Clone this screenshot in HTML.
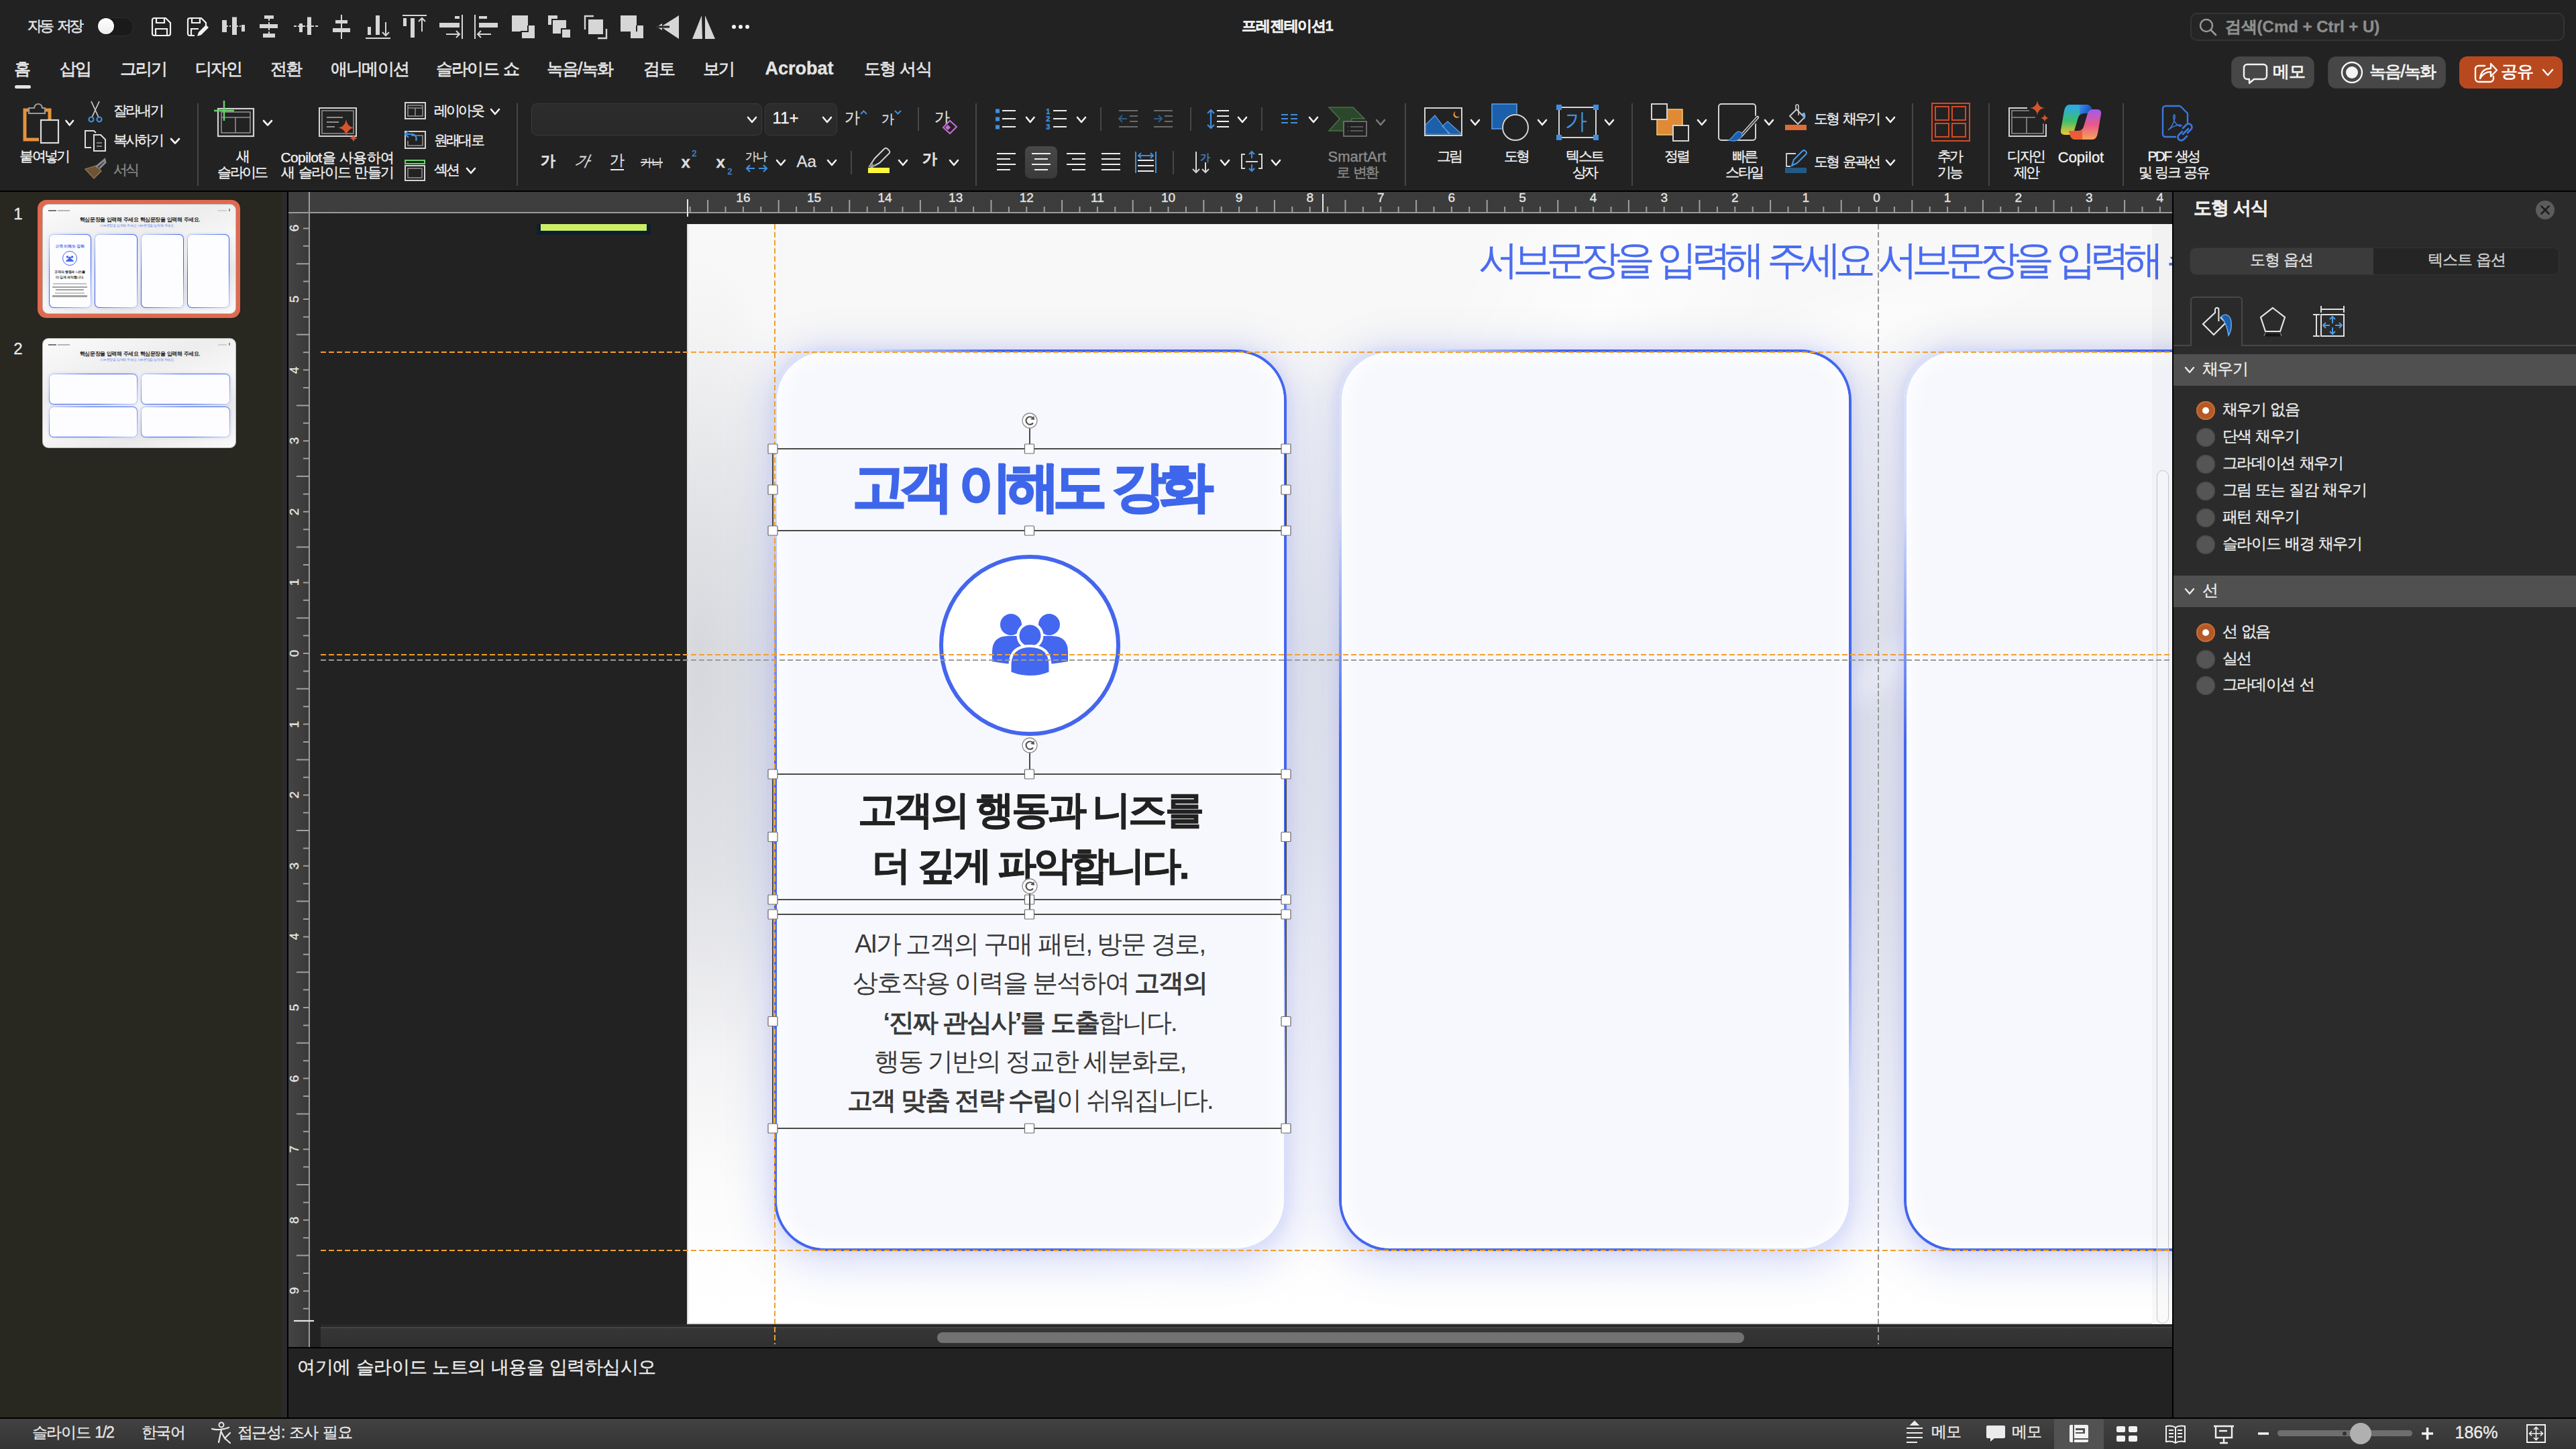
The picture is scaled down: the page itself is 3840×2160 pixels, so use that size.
<!DOCTYPE html>
<html><head><meta charset="utf-8">
<style>
*{margin:0;padding:0;box-sizing:border-box}
html,body{width:3840px;height:2160px;overflow:hidden;background:#222;font-family:"Liberation Sans",sans-serif;color:#eee}
.a{position:absolute}
.t{position:absolute;white-space:nowrap;line-height:1;-webkit-text-stroke:0.35px currentColor}
</style></head><body>
<div class="a" style="left:0px;top:0px;width:3840px;height:284px;background:#222"></div><div class="a" style="left:0px;top:284px;width:3840px;height:2px;background:#000"></div><div class="a" style="left:0px;top:286px;width:420px;height:1827px;background:#282720"></div><div class="a" style="left:420px;top:286px;width:8px;height:1827px;background:#2b2b2b"></div><div class="a" style="left:428px;top:286px;width:2px;height:1827px;background:#000"></div><div class="a" style="left:430px;top:286px;width:2808px;height:1692px;background:#222"></div><div class="a" style="left:3238px;top:286px;width:2px;height:1827px;background:#000"></div><div class="a" style="left:3240px;top:286px;width:600px;height:1827px;background:#2b2b2b"></div><div class="a" style="left:478px;top:1974px;width:2760px;height:4px;background:#292929"></div><div class="a" style="left:478px;top:1978px;width:2760px;height:30px;background:linear-gradient(#363636,#303030);border-top:2px solid #444;border-bottom:1.5px solid #3a3a3a"></div><div class="a" style="left:428px;top:2008px;width:2810px;height:2px;background:#000"></div><div class="a" style="left:430px;top:2010px;width:2808px;height:103px;background:#222"></div><div class="a" style="left:0px;top:2113px;width:3840px;height:2px;background:#000"></div><div class="a" style="left:0px;top:2115px;width:3840px;height:45px;background:linear-gradient(#424242,#343434)"></div><div class="t" style="left:40.7px;top:27.7px;font-size:22px;color:#e2e2e2;font-weight:400;letter-spacing:-3.4px;word-spacing:3.7px;word-spacing:4px;-webkit-text-stroke:0.6px #e2e2e2">자동 저장</div><div class="a" style="left:144px;top:26px;width:55px;height:28px;background:#1a1a1a;border-radius:14px;border:1px solid #2e2e2e"></div><div class="a" style="left:146px;top:27px;width:24px;height:24px;background:linear-gradient(#fff,#ececec);border-radius:12px;box-shadow:0 0 0 1px rgba(0,0,0,.35)"></div><div class="t" style="left:919px;width:2000px;text-align:center;top:27.7px;font-size:22px;color:#f0f0f0;font-weight:700;letter-spacing:-1.3px;word-spacing:1.4px;">프레젠테이션1</div><div class="a" style="left:3265px;top:19px;width:558px;height:42px;background:#252525;border:2px solid #343434;border-radius:10px"></div><div class="t" style="left:3316.6px;top:27.6px;font-size:24px;color:#8d8d8d;font-weight:700;letter-spacing:0px;">검색(Cmd + Ctrl + U)</div><div class="t" style="left:20.5px;top:90.0px;font-size:25px;color:#e4e4e4;font-weight:400;letter-spacing:-1.6px;word-spacing:1.8px;-webkit-text-stroke:0.7px #e4e4e4">홈</div><div class="t" style="left:88.5px;top:90.0px;font-size:25px;color:#e4e4e4;font-weight:400;letter-spacing:-1.6px;word-spacing:1.8px;-webkit-text-stroke:0.7px #e4e4e4">삽입</div><div class="t" style="left:178.5px;top:90.0px;font-size:25px;color:#e4e4e4;font-weight:400;letter-spacing:-1.6px;word-spacing:1.8px;-webkit-text-stroke:0.7px #e4e4e4">그리기</div><div class="t" style="left:290.5px;top:90.0px;font-size:25px;color:#e4e4e4;font-weight:400;letter-spacing:-1.6px;word-spacing:1.8px;-webkit-text-stroke:0.7px #e4e4e4">디자인</div><div class="t" style="left:402.5px;top:90.0px;font-size:25px;color:#e4e4e4;font-weight:400;letter-spacing:-1.6px;word-spacing:1.8px;-webkit-text-stroke:0.7px #e4e4e4">전환</div><div class="t" style="left:492.5px;top:90.0px;font-size:25px;color:#e4e4e4;font-weight:400;letter-spacing:-1.6px;word-spacing:1.8px;-webkit-text-stroke:0.7px #e4e4e4">애니메이션</div><div class="t" style="left:649.5px;top:90.0px;font-size:25px;color:#e4e4e4;font-weight:400;letter-spacing:-1.6px;word-spacing:1.8px;-webkit-text-stroke:0.7px #e4e4e4">슬라이드 쇼</div><div class="t" style="left:814.5px;top:90.0px;font-size:25px;color:#e4e4e4;font-weight:400;letter-spacing:-1.6px;word-spacing:1.8px;-webkit-text-stroke:0.7px #e4e4e4">녹음/녹화</div><div class="t" style="left:958.5px;top:90.0px;font-size:25px;color:#e4e4e4;font-weight:400;letter-spacing:-1.6px;word-spacing:1.8px;-webkit-text-stroke:0.7px #e4e4e4">검토</div><div class="t" style="left:1047.5px;top:90.0px;font-size:25px;color:#e4e4e4;font-weight:400;letter-spacing:-1.6px;word-spacing:1.8px;-webkit-text-stroke:0.7px #e4e4e4">보기</div><div class="t" style="left:1140.4px;top:88.9px;font-size:27px;color:#e4e4e4;font-weight:700;letter-spacing:0px;">Acrobat</div><div class="t" style="left:1287.5px;top:90.0px;font-size:25px;color:#e4e4e4;font-weight:400;letter-spacing:-1.6px;word-spacing:1.8px;-webkit-text-stroke:0.7px #e4e4e4">도형 서식</div><div class="a" style="left:22px;top:127px;width:24px;height:5px;background:#e4e4e4;border-radius:3px"></div><div class="a" style="left:3326px;top:84px;width:124px;height:48px;background:#474747;border-radius:12px;border:1px solid #3f3f3f"></div><div class="t" style="left:3387.5px;top:94.0px;font-size:25px;color:#f4f4f4;font-weight:400;letter-spacing:-1px;word-spacing:1.1px;-webkit-text-stroke:0.8px #f4f4f4">메모</div><div class="a" style="left:3470px;top:84px;width:176px;height:48px;background:#474747;border-radius:12px;border:1px solid #3f3f3f"></div><div class="t" style="left:3531.5px;top:94.0px;font-size:25px;color:#f4f4f4;font-weight:400;letter-spacing:-1.5px;word-spacing:1.7px;-webkit-text-stroke:0.8px #f4f4f4">녹음/녹화</div><div class="a" style="left:3666px;top:84px;width:154px;height:48px;background:#b8491f;border-radius:12px"></div><div class="t" style="left:3727.5px;top:94.0px;font-size:25px;color:#fff;font-weight:400;letter-spacing:-1px;word-spacing:1.1px;-webkit-text-stroke:0.8px #fff">공유</div><div class="t" style="left:-934px;width:2000px;text-align:center;top:222.2px;font-size:21px;color:#f2f2f2;font-weight:400;letter-spacing:-2.6px;word-spacing:2.9px;">붙여넣기</div><div class="t" style="left:168.7px;top:154.2px;font-size:21px;color:#f2f2f2;font-weight:400;letter-spacing:-2.6px;word-spacing:2.9px;">잘라내기</div><div class="t" style="left:168.7px;top:198.2px;font-size:21px;color:#f2f2f2;font-weight:400;letter-spacing:-2.6px;word-spacing:2.9px;">복사하기</div><div class="t" style="left:168.7px;top:242.2px;font-size:21px;color:#8c8c8c;font-weight:400;letter-spacing:-2.6px;word-spacing:2.9px;">서식</div><div class="a" style="left:294px;top:154px;width:2px;height:123px;background:#464646"></div><div class="t" style="left:-639px;width:2000px;text-align:center;top:222.2px;font-size:21px;color:#f2f2f2;font-weight:400;letter-spacing:-2.6px;word-spacing:2.9px;">새</div><div class="t" style="left:-639px;width:2000px;text-align:center;top:246.2px;font-size:21px;color:#f2f2f2;font-weight:400;letter-spacing:-2.6px;word-spacing:2.9px;">슬라이드</div><div class="t" style="left:-497px;width:2000px;text-align:center;top:224.2px;font-size:21px;color:#f2f2f2;font-weight:400;letter-spacing:-0.6px;word-spacing:0.7px;">Copilot을 사용하여</div><div class="t" style="left:-497px;width:2000px;text-align:center;top:246.2px;font-size:21px;color:#f2f2f2;font-weight:400;letter-spacing:-1.6px;word-spacing:1.8px;">새 슬라이드 만들기</div><div class="t" style="left:646.7px;top:154.2px;font-size:21px;color:#f2f2f2;font-weight:400;letter-spacing:-2.6px;word-spacing:2.9px;">레이아웃</div><div class="t" style="left:646.7px;top:198.2px;font-size:21px;color:#f2f2f2;font-weight:400;letter-spacing:-2.6px;word-spacing:2.9px;">원래대로</div><div class="t" style="left:646.7px;top:242.2px;font-size:21px;color:#f2f2f2;font-weight:400;letter-spacing:-2.6px;word-spacing:2.9px;">섹션</div><div class="a" style="left:770px;top:154px;width:2px;height:123px;background:#464646"></div><div class="a" style="left:792px;top:154px;width:344px;height:48px;background:linear-gradient(#2c2c2c,#292929);border:1.5px solid #3a3a3a;border-radius:8px"></div><div class="a" style="left:1140px;top:154px;width:108px;height:48px;background:linear-gradient(#2c2c2c,#292929);border:1.5px solid #3a3a3a;border-radius:8px"></div><div class="t" style="left:1151.6px;top:163.6px;font-size:24px;color:#f4f4f4;font-weight:400;letter-spacing:0px;">11+</div><div class="t" style="left:1258.6px;top:164.1px;font-size:23px;color:#dedede;font-weight:400;letter-spacing:0px;">가</div><div class="t" style="left:1313.9px;top:168.4px;font-size:19px;color:#dedede;font-weight:400;letter-spacing:0px;">가</div><div class="a" style="left:1368px;top:160px;width:2px;height:35px;background:#464646"></div><div class="t" style="left:1392.6px;top:164.1px;font-size:23px;color:#dedede;font-weight:400;letter-spacing:0px;">가</div><div class="a" style="left:1454px;top:154px;width:2px;height:123px;background:#464646"></div><div class="t" style="left:805.7px;top:228.7px;font-size:22px;color:#dedede;font-weight:700;letter-spacing:0px;">가</div><div class="t" style="left:856.7px;top:228.7px;font-size:22px;color:#dedede;font-weight:400;letter-spacing:0px;font-style:italic;transform:skewX(-12deg)">가</div><div class="t" style="left:908.7px;top:227.7px;font-size:22px;color:#dedede;font-weight:400;letter-spacing:0px;">가</div><div class="a" style="left:910px;top:252px;width:20px;height:2px;background:#eee"></div><div class="t" style="left:955.0px;top:233.5px;font-size:17px;color:#dedede;font-weight:400;letter-spacing:-1px;word-spacing:1.1px;">카나</div><div class="a" style="left:955px;top:241px;width:33px;height:1.5px;background:#ddd"></div><div class="t" style="left:1015.6px;top:229.6px;font-size:24px;color:#dedede;font-weight:700;letter-spacing:0px;">x</div><div class="t" style="left:1031.2px;top:221.7px;font-size:13px;color:#3f8fde;font-weight:400;letter-spacing:0px;">2</div><div class="t" style="left:1067.6px;top:229.6px;font-size:24px;color:#dedede;font-weight:700;letter-spacing:0px;">x</div><div class="t" style="left:1084.2px;top:248.7px;font-size:13px;color:#3f8fde;font-weight:400;letter-spacing:0px;">2</div><div class="t" style="left:1111.0px;top:224.5px;font-size:17px;color:#dedede;font-weight:400;letter-spacing:-1px;word-spacing:1.1px;">가나</div><div class="t" style="left:1187.6px;top:228.6px;font-size:24px;color:#dedede;font-weight:400;letter-spacing:0px;">Aa</div><div class="a" style="left:1268px;top:225px;width:2px;height:35px;background:#464646"></div><div class="a" style="left:1294px;top:250px;width:32px;height:8px;background:#fff740"></div><div class="t" style="left:1374.7px;top:225.7px;font-size:22px;color:#dedede;font-weight:700;letter-spacing:0px;">가</div><div class="t" style="left:1559.3px;top:160.8px;font-size:11px;color:#3f8fde;font-weight:700;letter-spacing:0px;">1</div><div class="t" style="left:1559.3px;top:171.8px;font-size:11px;color:#3f8fde;font-weight:700;letter-spacing:0px;">2</div><div class="t" style="left:1559.3px;top:183.8px;font-size:11px;color:#3f8fde;font-weight:700;letter-spacing:0px;">3</div><div class="a" style="left:1640px;top:160px;width:2px;height:35px;background:#464646"></div><div class="a" style="left:1774px;top:160px;width:2px;height:35px;background:#464646"></div><div class="a" style="left:1880px;top:160px;width:2px;height:35px;background:#464646"></div><div class="t" style="left:1023px;width:2000px;text-align:center;top:222.7px;font-size:22px;color:#8c8c8c;font-weight:400;letter-spacing:0px;">SmartArt</div><div class="t" style="left:1023px;width:2000px;text-align:center;top:246.2px;font-size:21px;color:#8c8c8c;font-weight:400;letter-spacing:-2.6px;word-spacing:2.9px;">로 변환</div><div class="a" style="left:1528px;top:218px;width:48px;height:48px;background:linear-gradient(#484848,#3a3a3a);border-radius:8px"></div><div class="a" style="left:1748px;top:225px;width:2px;height:35px;background:#464646"></div><div class="t" style="left:1789.1px;top:226.6px;font-size:15px;color:#3f8fde;font-weight:400;letter-spacing:0px;">가</div><div class="a" style="left:2094px;top:154px;width:2px;height:123px;background:#464646"></div><div class="t" style="left:1160px;width:2000px;text-align:center;top:222.2px;font-size:21px;color:#f2f2f2;font-weight:400;letter-spacing:-2.6px;word-spacing:2.9px;">그림</div><div class="t" style="left:1260px;width:2000px;text-align:center;top:222.2px;font-size:21px;color:#f2f2f2;font-weight:400;letter-spacing:-2.6px;word-spacing:2.9px;">도형</div><div class="t" style="left:2333.0px;top:163.5px;font-size:33px;color:#3f8fde;font-weight:400;letter-spacing:-1px;word-spacing:1.1px;-webkit-text-stroke:0">가</div><div class="t" style="left:1362px;width:2000px;text-align:center;top:222.2px;font-size:21px;color:#f2f2f2;font-weight:400;letter-spacing:-2.6px;word-spacing:2.9px;">텍스트</div><div class="t" style="left:1362px;width:2000px;text-align:center;top:246.2px;font-size:21px;color:#f2f2f2;font-weight:400;letter-spacing:-2.6px;word-spacing:2.9px;">상자</div><div class="a" style="left:2432px;top:154px;width:2px;height:123px;background:#464646"></div><div class="t" style="left:1499px;width:2000px;text-align:center;top:222.2px;font-size:21px;color:#f2f2f2;font-weight:400;letter-spacing:-2.6px;word-spacing:2.9px;">정렬</div><div class="t" style="left:1600px;width:2000px;text-align:center;top:222.2px;font-size:21px;color:#f2f2f2;font-weight:400;letter-spacing:-2.6px;word-spacing:2.9px;">빠른</div><div class="t" style="left:1600px;width:2000px;text-align:center;top:246.2px;font-size:21px;color:#f2f2f2;font-weight:400;letter-spacing:-2.6px;word-spacing:2.9px;">스타일</div><div class="a" style="left:2661px;top:186px;width:32px;height:8px;background:#e06d35"></div><div class="t" style="left:2703.7px;top:166.2px;font-size:21px;color:#f2f2f2;font-weight:400;letter-spacing:-2.6px;word-spacing:2.9px;">도형 채우기</div><div class="a" style="left:2661px;top:250px;width:32px;height:8px;background:#235a85"></div><div class="t" style="left:2703.7px;top:230.2px;font-size:21px;color:#f2f2f2;font-weight:400;letter-spacing:-2.6px;word-spacing:2.9px;">도형 윤곽선</div><div class="a" style="left:2850px;top:154px;width:2px;height:123px;background:#464646"></div><div class="t" style="left:1906px;width:2000px;text-align:center;top:222.2px;font-size:21px;color:#f2f2f2;font-weight:400;letter-spacing:-2.6px;word-spacing:2.9px;">추가</div><div class="t" style="left:1906px;width:2000px;text-align:center;top:246.2px;font-size:21px;color:#f2f2f2;font-weight:400;letter-spacing:-2.6px;word-spacing:2.9px;">기능</div><div class="a" style="left:2964px;top:154px;width:2px;height:123px;background:#464646"></div><div class="t" style="left:2020px;width:2000px;text-align:center;top:222.2px;font-size:21px;color:#f2f2f2;font-weight:400;letter-spacing:-2.6px;word-spacing:2.9px;">디자인</div><div class="t" style="left:2020px;width:2000px;text-align:center;top:246.2px;font-size:21px;color:#f2f2f2;font-weight:400;letter-spacing:-2.6px;word-spacing:2.9px;">제안</div><div class="t" style="left:2102px;width:2000px;text-align:center;top:223.7px;font-size:22px;color:#f2f2f2;font-weight:400;letter-spacing:0px;">Copilot</div><div class="a" style="left:3164px;top:154px;width:2px;height:123px;background:#464646"></div><div class="t" style="left:2240px;width:2000px;text-align:center;top:222.2px;font-size:21px;color:#f2f2f2;font-weight:400;letter-spacing:-2.6px;word-spacing:2.9px;">PDF 생성</div><div class="t" style="left:2240px;width:2000px;text-align:center;top:246.2px;font-size:21px;color:#f2f2f2;font-weight:400;letter-spacing:-2.6px;word-spacing:2.9px;">및 링크 공유</div><div class="t" style="left:-973px;width:2000px;text-align:center;top:306.6px;font-size:24px;color:#eaeaea;font-weight:400;letter-spacing:0px;">1</div><div class="t" style="left:-973px;width:2000px;text-align:center;top:507.6px;font-size:24px;color:#eaeaea;font-weight:400;letter-spacing:0px;">2</div><div class="a" style="left:56px;top:298px;width:302px;height:176px;background:#e0694f;border-radius:13px"></div><div class="a" style="left:63px;top:304px;width:289px;height:164px;border-radius:9px;overflow:hidden;background:linear-gradient(160deg,#fbfbfb 0%,#ededed 35%,#f7f7f7 55%,#e9e9e9 75%,#fafafa 100%);border:1.5px solid #b9b9b9"></div><div class="a" style="left:72px;top:312.5px;width:12px;height:2.6px;background:#555;opacity:.8"></div><div class="a" style="left:86px;top:312.5px;width:18px;height:2.6px;background:#999;opacity:.7"></div><div class="a" style="left:325px;top:313px;width:13px;height:2.4px;background:#bbb;opacity:.6"></div><div class="a" style="left:341px;top:311px;width:1.5px;height:4px;background:#777;opacity:.8"></div><div class="t" style="left:-791.5px;width:2000px;text-align:center;top:324.0px;font-size:8px;color:#262626;font-weight:700;letter-spacing:-0.45px;word-spacing:0.5px;-webkit-text-stroke:0">핵심문장을 입력해 주세요 핵심문장을 입력해 주세요.</div><div class="t" style="left:-795.5px;width:2000px;text-align:center;top:334.9px;font-size:4.6px;color:#5577ee;font-weight:400;letter-spacing:-0.3px;word-spacing:0.3px;-webkit-text-stroke:0">서브문장을 입력해 주세요 서브문장을 입력해 주세요.</div><div class="a" style="left:73px;top:349px;width:63px;height:110px;border-radius:7px;background:#fff;border:1.6px solid transparent;background:linear-gradient(#fdfdff,#fdfdff) padding-box,linear-gradient(135deg,#c9d3fb 0%,#3f66ee 35%,#3f66ee 65%,#c9d3fb 100%) border-box;box-shadow:0 0 4px rgba(90,110,230,.25)"></div><div class="a" style="left:141px;top:349px;width:64px;height:110px;border-radius:7px;background:#fff;border:1.6px solid transparent;background:linear-gradient(#fdfdff,#fdfdff) padding-box,linear-gradient(135deg,#c9d3fb 0%,#3f66ee 35%,#3f66ee 65%,#c9d3fb 100%) border-box;box-shadow:0 0 4px rgba(90,110,230,.25)"></div><div class="a" style="left:210px;top:349px;width:64px;height:110px;border-radius:7px;background:#fff;border:1.6px solid transparent;background:linear-gradient(#fdfdff,#fdfdff) padding-box,linear-gradient(135deg,#c9d3fb 0%,#3f66ee 35%,#3f66ee 65%,#c9d3fb 100%) border-box;box-shadow:0 0 4px rgba(90,110,230,.25)"></div><div class="a" style="left:279px;top:349px;width:63px;height:110px;border-radius:7px;background:#fff;border:1.6px solid transparent;background:linear-gradient(#fdfdff,#fdfdff) padding-box,linear-gradient(135deg,#c9d3fb 0%,#3f66ee 35%,#3f66ee 65%,#c9d3fb 100%) border-box;box-shadow:0 0 4px rgba(90,110,230,.25)"></div><div class="t" style="left:-896px;width:2000px;text-align:center;top:363.6px;font-size:6px;color:#3f66ee;font-weight:700;letter-spacing:-0.3px;word-spacing:0.3px;-webkit-text-stroke:0">고객 이해도 강화</div><div class="a" style="left:93px;top:374px;width:22px;height:22px;border-radius:50%;border:1.6px solid #4466ee;background:#fff"></div><div class="t" style="left:-896px;width:2000px;text-align:center;top:402.7px;font-size:5px;color:#222;font-weight:700;letter-spacing:-0.25px;word-spacing:0.3px;-webkit-text-stroke:0">고객의 행동과 니즈를</div><div class="t" style="left:-896px;width:2000px;text-align:center;top:410.7px;font-size:5px;color:#222;font-weight:700;letter-spacing:-0.25px;word-spacing:0.3px;-webkit-text-stroke:0">더 깊게 파악합니다.</div><div class="a" style="left:79.0px;top:422.0px;width:50px;height:2.2px;background:#b4b4b4;opacity:.8"></div><div class="a" style="left:78.0px;top:426.6px;width:52px;height:2.2px;background:#8a8a8a;opacity:.8"></div><div class="a" style="left:83.0px;top:431.2px;width:42px;height:2.2px;background:#8a8a8a;opacity:.8"></div><div class="a" style="left:82.0px;top:435.8px;width:44px;height:2.2px;background:#b4b4b4;opacity:.8"></div><div class="a" style="left:78.0px;top:440.4px;width:52px;height:2.2px;background:#8a8a8a;opacity:.8"></div><div class="a" style="left:63px;top:504px;width:289px;height:164px;border-radius:9px;overflow:hidden;background:linear-gradient(160deg,#fbfbfb 0%,#ededed 35%,#f7f7f7 55%,#e9e9e9 75%,#fafafa 100%);border:1.5px solid #b9b9b9"></div><div class="a" style="left:72px;top:512.5px;width:12px;height:2.6px;background:#555;opacity:.8"></div><div class="a" style="left:86px;top:512.5px;width:18px;height:2.6px;background:#999;opacity:.7"></div><div class="a" style="left:325px;top:513px;width:13px;height:2.4px;background:#bbb;opacity:.6"></div><div class="a" style="left:341px;top:511px;width:1.5px;height:4px;background:#777;opacity:.8"></div><div class="t" style="left:-791.5px;width:2000px;text-align:center;top:524.0px;font-size:8px;color:#262626;font-weight:700;letter-spacing:-0.45px;word-spacing:0.5px;-webkit-text-stroke:0">핵심문장을 입력해 주세요 핵심문장을 입력해 주세요.</div><div class="t" style="left:-795.5px;width:2000px;text-align:center;top:534.9px;font-size:4.6px;color:#5577ee;font-weight:400;letter-spacing:-0.3px;word-spacing:0.3px;-webkit-text-stroke:0">서브문장을 입력해 주세요 서브문장을 입력해 주세요.</div><div class="a" style="left:73px;top:557px;width:132px;height:46px;border-radius:7px;background:#fff;border:1.6px solid transparent;background:linear-gradient(#fdfdff,#fdfdff) padding-box,linear-gradient(135deg,#c9d3fb 0%,#3f66ee 35%,#3f66ee 65%,#c9d3fb 100%) border-box;box-shadow:0 0 4px rgba(90,110,230,.25)"></div><div class="a" style="left:210px;top:557px;width:133px;height:46px;border-radius:7px;background:#fff;border:1.6px solid transparent;background:linear-gradient(#fdfdff,#fdfdff) padding-box,linear-gradient(135deg,#c9d3fb 0%,#3f66ee 35%,#3f66ee 65%,#c9d3fb 100%) border-box;box-shadow:0 0 4px rgba(90,110,230,.25)"></div><div class="a" style="left:73px;top:606px;width:132px;height:46px;border-radius:7px;background:#fff;border:1.6px solid transparent;background:linear-gradient(#fdfdff,#fdfdff) padding-box,linear-gradient(135deg,#c9d3fb 0%,#3f66ee 35%,#3f66ee 65%,#c9d3fb 100%) border-box;box-shadow:0 0 4px rgba(90,110,230,.25)"></div><div class="a" style="left:210px;top:606px;width:133px;height:46px;border-radius:7px;background:#fff;border:1.6px solid transparent;background:linear-gradient(#fdfdff,#fdfdff) padding-box,linear-gradient(135deg,#c9d3fb 0%,#3f66ee 35%,#3f66ee 65%,#c9d3fb 100%) border-box;box-shadow:0 0 4px rgba(90,110,230,.25)"></div><div class="a" style="left:430px;top:286px;width:2808px;height:30px;background:linear-gradient(90deg,#3e3e3e,#3a3a3a)"></div><div class="a" style="left:430px;top:316px;width:30px;height:1692px;background:linear-gradient(90deg,#444,#3a3a3a)"></div><div class="a" style="left:430px;top:316px;width:2808px;height:2px;background:#9b9b9b"></div><div class="a" style="left:460px;top:286px;width:2px;height:1722px;background:#9b9b9b"></div><div class="t" style="left:107.90000000000009px;width:2000px;text-align:center;top:285.4px;font-size:19px;color:#e6e6e6;font-weight:400;letter-spacing:0px;">16</div><div class="t" style="left:213.5px;width:2000px;text-align:center;top:285.4px;font-size:19px;color:#e6e6e6;font-weight:400;letter-spacing:0px;">15</div><div class="t" style="left:319.10000000000014px;width:2000px;text-align:center;top:285.4px;font-size:19px;color:#e6e6e6;font-weight:400;letter-spacing:0px;">14</div><div class="t" style="left:424.70000000000005px;width:2000px;text-align:center;top:285.4px;font-size:19px;color:#e6e6e6;font-weight:400;letter-spacing:0px;">13</div><div class="t" style="left:530.3000000000002px;width:2000px;text-align:center;top:285.4px;font-size:19px;color:#e6e6e6;font-weight:400;letter-spacing:0px;">12</div><div class="t" style="left:635.9000000000001px;width:2000px;text-align:center;top:285.4px;font-size:19px;color:#e6e6e6;font-weight:400;letter-spacing:0px;">11</div><div class="t" style="left:741.5px;width:2000px;text-align:center;top:285.4px;font-size:19px;color:#e6e6e6;font-weight:400;letter-spacing:0px;">10</div><div class="t" style="left:847.0999999999999px;width:2000px;text-align:center;top:285.4px;font-size:19px;color:#e6e6e6;font-weight:400;letter-spacing:0px;">9</div><div class="t" style="left:952.7px;width:2000px;text-align:center;top:285.4px;font-size:19px;color:#e6e6e6;font-weight:400;letter-spacing:0px;">8</div><div class="t" style="left:1058.3000000000002px;width:2000px;text-align:center;top:285.4px;font-size:19px;color:#e6e6e6;font-weight:400;letter-spacing:0px;">7</div><div class="t" style="left:1163.9px;width:2000px;text-align:center;top:285.4px;font-size:19px;color:#e6e6e6;font-weight:400;letter-spacing:0px;">6</div><div class="t" style="left:1269.5px;width:2000px;text-align:center;top:285.4px;font-size:19px;color:#e6e6e6;font-weight:400;letter-spacing:0px;">5</div><div class="t" style="left:1375.1px;width:2000px;text-align:center;top:285.4px;font-size:19px;color:#e6e6e6;font-weight:400;letter-spacing:0px;">4</div><div class="t" style="left:1480.6999999999998px;width:2000px;text-align:center;top:285.4px;font-size:19px;color:#e6e6e6;font-weight:400;letter-spacing:0px;">3</div><div class="t" style="left:1586.3000000000002px;width:2000px;text-align:center;top:285.4px;font-size:19px;color:#e6e6e6;font-weight:400;letter-spacing:0px;">2</div><div class="t" style="left:1691.9px;width:2000px;text-align:center;top:285.4px;font-size:19px;color:#e6e6e6;font-weight:400;letter-spacing:0px;">1</div><div class="t" style="left:1797.5px;width:2000px;text-align:center;top:285.4px;font-size:19px;color:#e6e6e6;font-weight:400;letter-spacing:0px;">0</div><div class="t" style="left:1903.1px;width:2000px;text-align:center;top:285.4px;font-size:19px;color:#e6e6e6;font-weight:400;letter-spacing:0px;">1</div><div class="t" style="left:2008.6999999999998px;width:2000px;text-align:center;top:285.4px;font-size:19px;color:#e6e6e6;font-weight:400;letter-spacing:0px;">2</div><div class="t" style="left:2114.3px;width:2000px;text-align:center;top:285.4px;font-size:19px;color:#e6e6e6;font-weight:400;letter-spacing:0px;">3</div><div class="t" style="left:2219.9px;width:2000px;text-align:center;top:285.4px;font-size:19px;color:#e6e6e6;font-weight:400;letter-spacing:0px;">4</div><div class="t" style="left:409px;top:330.4000000000001px;width:60px;height:20px;text-align:center;font-size:19px;color:#e6e6e6;transform:rotate(-90deg)">6</div><div class="t" style="left:409px;top:436.0px;width:60px;height:20px;text-align:center;font-size:19px;color:#e6e6e6;transform:rotate(-90deg)">5</div><div class="t" style="left:409px;top:541.6px;width:60px;height:20px;text-align:center;font-size:19px;color:#e6e6e6;transform:rotate(-90deg)">4</div><div class="t" style="left:409px;top:647.2px;width:60px;height:20px;text-align:center;font-size:19px;color:#e6e6e6;transform:rotate(-90deg)">3</div><div class="t" style="left:409px;top:752.8px;width:60px;height:20px;text-align:center;font-size:19px;color:#e6e6e6;transform:rotate(-90deg)">2</div><div class="t" style="left:409px;top:858.4px;width:60px;height:20px;text-align:center;font-size:19px;color:#e6e6e6;transform:rotate(-90deg)">1</div><div class="t" style="left:409px;top:964.0px;width:60px;height:20px;text-align:center;font-size:19px;color:#e6e6e6;transform:rotate(-90deg)">0</div><div class="t" style="left:409px;top:1069.6px;width:60px;height:20px;text-align:center;font-size:19px;color:#e6e6e6;transform:rotate(-90deg)">1</div><div class="t" style="left:409px;top:1175.2px;width:60px;height:20px;text-align:center;font-size:19px;color:#e6e6e6;transform:rotate(-90deg)">2</div><div class="t" style="left:409px;top:1280.8px;width:60px;height:20px;text-align:center;font-size:19px;color:#e6e6e6;transform:rotate(-90deg)">3</div><div class="t" style="left:409px;top:1386.4px;width:60px;height:20px;text-align:center;font-size:19px;color:#e6e6e6;transform:rotate(-90deg)">4</div><div class="t" style="left:409px;top:1492.0px;width:60px;height:20px;text-align:center;font-size:19px;color:#e6e6e6;transform:rotate(-90deg)">5</div><div class="t" style="left:409px;top:1597.6px;width:60px;height:20px;text-align:center;font-size:19px;color:#e6e6e6;transform:rotate(-90deg)">6</div><div class="t" style="left:409px;top:1703.1999999999998px;width:60px;height:20px;text-align:center;font-size:19px;color:#e6e6e6;transform:rotate(-90deg)">7</div><div class="t" style="left:409px;top:1808.8px;width:60px;height:20px;text-align:center;font-size:19px;color:#e6e6e6;transform:rotate(-90deg)">8</div><div class="t" style="left:409px;top:1914.4px;width:60px;height:20px;text-align:center;font-size:19px;color:#e6e6e6;transform:rotate(-90deg)">9</div><div class="a" style="left:800px;top:334px;width:170px;height:16px;background:#0d1f2c"></div><div class="a" style="left:806px;top:334px;width:158px;height:10px;background:#cbee66"></div><div class="a" style="left:1024px;top:334px;width:2214px;height:1640px;overflow:hidden"><div class="a" style="left:0px;top:0px;width:2214px;height:1640px;background:linear-gradient(180deg,#f8f8f8 0%,#f6f6f6 40%,#f4f4f5 60%,#fbfbfb 85%,#ffffff 100%)"></div><div class="a" style="left:0px;top:0px;width:2214px;height:1640px;background:linear-gradient(115deg,rgba(255,255,255,0) 0%,rgba(255,255,255,0) 40%,rgba(255,255,255,.7) 48%,rgba(255,255,255,0) 56%,rgba(255,255,255,0) 100%)"></div><div class="a" style="left:0px;top:0px;width:2214px;height:1640px;background:linear-gradient(180deg,rgba(205,207,216,0) 150px,rgba(205,207,216,.15) 350px,rgba(205,207,216,.38) 650px,rgba(205,207,216,.35) 900px,rgba(205,207,216,.12) 1250px,rgba(205,207,216,0) 1450px)"></div><div class="a" style="left:0px;top:0px;width:2214px;height:1640px;background:radial-gradient(ellipse 160px 600px at 20px 650px,rgba(190,192,200,.4),rgba(190,192,200,0))"></div><div class="a" style="left:1326px;top:136px;width:700px;height:80px;background:rgba(255,255,255,.4);transform:rotate(-18deg);filter:blur(22px);border-radius:50%"></div><div class="a" style="left:1656px;top:546px;width:600px;height:60px;background:rgba(255,255,255,.6);transform:rotate(-28deg);filter:blur(18px);border-radius:50%"></div><div class="t" style="left:1180px;top:24px;font-size:60px;color:#4a6cf0;letter-spacing:-9.3px;word-spacing:5px;-webkit-text-stroke:0">서브문장을 입력해 주세요 서브문장을 입력해 주세요.</div><div class="a" style="left:130px;top:187px;width:764px;height:1344px;border-radius:76px;box-shadow:0 10px 60px 12px rgba(95,115,235,.22),0 0 18px 2px rgba(95,115,235,.12)"></div><div class="a" style="left:130px;top:187px;width:764px;height:1344px;border-radius:76px;border:4px solid transparent;background:linear-gradient(#f7f8fd,#f7f8fd) padding-box,linear-gradient(to bottom right,#dce2fa 0%,#d6ddfa 9%,#4466ee 22%,#4466ee 78%,#d6ddfa 91%,#dce2fa 100%) border-box"></div><div class="a" style="left:134px;top:191px;width:756px;height:1336px;border-radius:72px;box-shadow:inset 0 0 26px 8px rgba(255,255,255,.9)"></div><div class="a" style="left:972px;top:187px;width:764px;height:1344px;border-radius:76px;box-shadow:0 10px 60px 12px rgba(95,115,235,.22),0 0 18px 2px rgba(95,115,235,.12)"></div><div class="a" style="left:972px;top:187px;width:764px;height:1344px;border-radius:76px;border:4px solid transparent;background:linear-gradient(#f7f8fd,#f7f8fd) padding-box,linear-gradient(to bottom right,#dce2fa 0%,#d6ddfa 9%,#4466ee 22%,#4466ee 78%,#d6ddfa 91%,#dce2fa 100%) border-box"></div><div class="a" style="left:976px;top:191px;width:756px;height:1336px;border-radius:72px;box-shadow:inset 0 0 26px 8px rgba(255,255,255,.9)"></div><div class="a" style="left:1814px;top:187px;width:764px;height:1344px;border-radius:76px;box-shadow:0 10px 60px 12px rgba(95,115,235,.22),0 0 18px 2px rgba(95,115,235,.12)"></div><div class="a" style="left:1814px;top:187px;width:764px;height:1344px;border-radius:76px;border:4px solid transparent;background:linear-gradient(#f7f8fd,#f7f8fd) padding-box,linear-gradient(to bottom right,#dce2fa 0%,#d6ddfa 9%,#4466ee 22%,#4466ee 78%,#d6ddfa 91%,#dce2fa 100%) border-box"></div><div class="a" style="left:1818px;top:191px;width:756px;height:1336px;border-radius:72px;box-shadow:inset 0 0 26px 8px rgba(255,255,255,.9)"></div><div class="t" style="left:11px;width:1000px;text-align:center;top:352px;font-size:80px;font-weight:900;color:#3e66ea;letter-spacing:-9.3px;word-spacing:4px;-webkit-text-stroke:2.5px #3e66ea">고객 이해도 강화</div><div class="a" style="left:376px;top:493px;width:270px;height:270px;border-radius:50%;border:6.5px solid #4466ee;background:#fff"></div><div class="t" style="left:11px;width:1000px;text-align:center;top:844px;font-size:58px;font-weight:700;color:#222;letter-spacing:-3.9px;-webkit-text-stroke:0.7px #222">고객의 행동과 니즈를</div><div class="t" style="left:11px;width:1000px;text-align:center;top:927px;font-size:58px;font-weight:700;color:#222;letter-spacing:-3.9px;-webkit-text-stroke:0.7px #222">더 깊게 파악합니다.</div><div class="t" style="left:11px;width:1000px;text-align:center;top:1054.0px;font-size:38px;font-weight:300;color:#3a3a3a;letter-spacing:-2.1px;-webkit-text-stroke:0">AI가 고객의 구매 패턴, 방문 경로,</div><div class="t" style="left:11px;width:1000px;text-align:center;top:1112.3px;font-size:38px;font-weight:300;color:#3a3a3a;letter-spacing:-2.1px;-webkit-text-stroke:0">상호작용 이력을 분석하여 <span style="font-weight:700">고객의</span></div><div class="t" style="left:11px;width:1000px;text-align:center;top:1170.6px;font-size:38px;font-weight:300;color:#3a3a3a;letter-spacing:-2.1px;-webkit-text-stroke:0"><span style="font-weight:700">‘진짜 관심사’를 도출</span>합니다.</div><div class="t" style="left:11px;width:1000px;text-align:center;top:1228.9px;font-size:38px;font-weight:300;color:#3a3a3a;letter-spacing:-2.1px;-webkit-text-stroke:0">행동 기반의 정교한 세분화로,</div><div class="t" style="left:11px;width:1000px;text-align:center;top:1287.2px;font-size:38px;font-weight:300;color:#3a3a3a;letter-spacing:-2.1px;-webkit-text-stroke:0"><span style="font-weight:700">고객 맞춤 전략 수립</span>이 쉬워집니다.</div></div><div class="a" style="left:1024px;top:334px;width:2px;height:1640px;background:#dcdcdc"></div><div class="a" style="left:1024px;top:1972px;width:2184px;height:2px;background:#dcdcdc"></div><div class="a" style="left:3208px;top:334px;width:30px;height:1640px;background:rgba(0,0,20,.025)"></div><div class="a" style="left:3215px;top:701px;width:18px;height:1272px;border-radius:9px;border:1.5px solid #c4c5cc;background:rgba(255,255,255,.25)"></div><svg width="3840" height="2160" style="position:absolute;left:0;top:0;clip-path:inset(318px 602px 152px 462px)"><g fill="#4367ef"><circle cx="1507" cy="931" r="16"/><circle cx="1564" cy="931" r="16"/><path d="M1479 986 V972 Q1479 948 1503 948 H1524 V991 Q1500 990 1479 986 Z M1592 986 V972 Q1592 948 1568 948 H1547 V991 Q1571 990 1592 986 Z"/></g><g fill="#4367ef" stroke="#fff" stroke-width="4"><circle cx="1535.5" cy="947.5" r="18"/><path d="M1505.5 1003 V992 Q1505.5 963 1535.5 963 Q1565.5 963 1565.5 992 V1003 Q1535.5 1015 1505.5 1003 Z"/></g><path d="M478 525 H3238 M478 976 H3238 M478 1864 H3238" stroke="#f0a030" stroke-width="2" stroke-dasharray="8 4"/><path d="M478 984 H3238" stroke="#9a9a9a" stroke-width="2" stroke-dasharray="8 4"/><path d="M1155 334 V2004" stroke="#f0a030" stroke-width="2" stroke-dasharray="8 4"/><path d="M2800 334 V2004" stroke="#9a9a9a" stroke-width="2" stroke-dasharray="8 4"/><rect x="1152" y="669" width="765" height="122" fill="none" stroke="#4a4a4a" stroke-width="2"/><path d="M1535 669 V637" stroke="#4a4a4a" stroke-width="2"/><circle cx="1535" cy="627" r="11" fill="#fff" stroke="#8e8e8e" stroke-width="1.3"/><path d="M1540 630.5 A5.8 5.8 0 1 1 1539.5 623" fill="none" stroke="#555" stroke-width="2.2"/><path d="M1541.5 620 L1542 626 L1536 625 Z" fill="#555"/><rect x="1145" y="662" width="14" height="14" rx="1" fill="#fff" stroke="#6a6a6a" stroke-width="1.2"/><rect x="1527.5" y="662" width="14" height="14" rx="1" fill="#fff" stroke="#6a6a6a" stroke-width="1.2"/><rect x="1910" y="662" width="14" height="14" rx="1" fill="#fff" stroke="#6a6a6a" stroke-width="1.2"/><rect x="1145" y="723.0" width="14" height="14" rx="1" fill="#fff" stroke="#6a6a6a" stroke-width="1.2"/><rect x="1910" y="723.0" width="14" height="14" rx="1" fill="#fff" stroke="#6a6a6a" stroke-width="1.2"/><rect x="1145" y="784" width="14" height="14" rx="1" fill="#fff" stroke="#6a6a6a" stroke-width="1.2"/><rect x="1527.5" y="784" width="14" height="14" rx="1" fill="#fff" stroke="#6a6a6a" stroke-width="1.2"/><rect x="1910" y="784" width="14" height="14" rx="1" fill="#fff" stroke="#6a6a6a" stroke-width="1.2"/><rect x="1152" y="1154" width="765" height="187" fill="none" stroke="#4a4a4a" stroke-width="2"/><path d="M1535 1154 V1121" stroke="#4a4a4a" stroke-width="2"/><circle cx="1535" cy="1111" r="11" fill="#fff" stroke="#8e8e8e" stroke-width="1.3"/><path d="M1540 1114.5 A5.8 5.8 0 1 1 1539.5 1107" fill="none" stroke="#555" stroke-width="2.2"/><path d="M1541.5 1104 L1542 1110 L1536 1109 Z" fill="#555"/><rect x="1145" y="1147" width="14" height="14" rx="1" fill="#fff" stroke="#6a6a6a" stroke-width="1.2"/><rect x="1527.5" y="1147" width="14" height="14" rx="1" fill="#fff" stroke="#6a6a6a" stroke-width="1.2"/><rect x="1910" y="1147" width="14" height="14" rx="1" fill="#fff" stroke="#6a6a6a" stroke-width="1.2"/><rect x="1145" y="1240.5" width="14" height="14" rx="1" fill="#fff" stroke="#6a6a6a" stroke-width="1.2"/><rect x="1910" y="1240.5" width="14" height="14" rx="1" fill="#fff" stroke="#6a6a6a" stroke-width="1.2"/><rect x="1145" y="1334" width="14" height="14" rx="1" fill="#fff" stroke="#6a6a6a" stroke-width="1.2"/><rect x="1527.5" y="1334" width="14" height="14" rx="1" fill="#fff" stroke="#6a6a6a" stroke-width="1.2"/><rect x="1910" y="1334" width="14" height="14" rx="1" fill="#fff" stroke="#6a6a6a" stroke-width="1.2"/><rect x="1152" y="1363" width="765" height="319" fill="none" stroke="#4a4a4a" stroke-width="2"/><path d="M1535 1363 V1331" stroke="#4a4a4a" stroke-width="2"/><circle cx="1535" cy="1321" r="11" fill="#fff" stroke="#8e8e8e" stroke-width="1.3"/><path d="M1540 1324.5 A5.8 5.8 0 1 1 1539.5 1317" fill="none" stroke="#555" stroke-width="2.2"/><path d="M1541.5 1314 L1542 1320 L1536 1319 Z" fill="#555"/><rect x="1145" y="1356" width="14" height="14" rx="1" fill="#fff" stroke="#6a6a6a" stroke-width="1.2"/><rect x="1527.5" y="1356" width="14" height="14" rx="1" fill="#fff" stroke="#6a6a6a" stroke-width="1.2"/><rect x="1910" y="1356" width="14" height="14" rx="1" fill="#fff" stroke="#6a6a6a" stroke-width="1.2"/><rect x="1145" y="1515.5" width="14" height="14" rx="1" fill="#fff" stroke="#6a6a6a" stroke-width="1.2"/><rect x="1910" y="1515.5" width="14" height="14" rx="1" fill="#fff" stroke="#6a6a6a" stroke-width="1.2"/><rect x="1145" y="1675" width="14" height="14" rx="1" fill="#fff" stroke="#6a6a6a" stroke-width="1.2"/><rect x="1527.5" y="1675" width="14" height="14" rx="1" fill="#fff" stroke="#6a6a6a" stroke-width="1.2"/><rect x="1910" y="1675" width="14" height="14" rx="1" fill="#fff" stroke="#6a6a6a" stroke-width="1.2"/></svg><div class="a" style="left:1397px;top:1986px;width:1203px;height:16px;background:#727272;border-radius:8px"></div><div class="t" style="left:443.4px;top:2024.9px;font-size:27px;color:#ececec;font-weight:400;letter-spacing:-0.45px;word-spacing:0.5px;">여기에 슬라이드 노트의 내용을 입력하십시오</div><div class="t" style="left:3270.4px;top:296.9px;font-size:27px;color:#ececec;font-weight:700;letter-spacing:-1.5px;word-spacing:1.7px;">도형 서식</div><div class="a" style="left:3264px;top:369px;width:551px;height:41px;background:#252525;border:1.5px solid #333;border-radius:9px"></div><div class="a" style="left:3265px;top:370px;width:273px;height:39px;background:#3b3b3b;border-radius:8px 0 0 8px"></div><div class="t" style="left:2401px;width:2000px;text-align:center;top:376.1px;font-size:23px;color:#e2e2e2;font-weight:400;letter-spacing:-1.2px;word-spacing:1.3px;">도형 옵션</div><div class="t" style="left:2677px;width:2000px;text-align:center;top:376.1px;font-size:23px;color:#d2d2d2;font-weight:400;letter-spacing:-1.2px;word-spacing:1.3px;">텍스트 옵션</div><div class="a" style="left:3240px;top:514px;width:600px;height:2px;background:#484848"></div><div class="a" style="left:3265px;top:442px;width:78px;height:74px;background:#2a2a2a;border:2px solid #484848;border-bottom:none;border-radius:6px 6px 0 0"></div><div class="a" style="left:3240px;top:528px;width:600px;height:47px;background:#505050"></div><div class="t" style="left:3282.6px;top:537.6px;font-size:24px;color:#ececec;font-weight:400;letter-spacing:-1.4px;word-spacing:1.5px;">채우기</div><div class="t" style="left:3312.6px;top:599.1px;font-size:23px;color:#ececec;font-weight:400;letter-spacing:-1.3px;word-spacing:1.4px;">채우기 없음</div><div class="t" style="left:3312.6px;top:639.1px;font-size:23px;color:#ececec;font-weight:400;letter-spacing:-1.3px;word-spacing:1.4px;">단색 채우기</div><div class="t" style="left:3312.6px;top:679.1px;font-size:23px;color:#ececec;font-weight:400;letter-spacing:-1.3px;word-spacing:1.4px;">그라데이션 채우기</div><div class="t" style="left:3312.6px;top:719.1px;font-size:23px;color:#ececec;font-weight:400;letter-spacing:-1.3px;word-spacing:1.4px;">그림 또는 질감 채우기</div><div class="t" style="left:3312.6px;top:759.1px;font-size:23px;color:#ececec;font-weight:400;letter-spacing:-1.3px;word-spacing:1.4px;">패턴 채우기</div><div class="t" style="left:3312.6px;top:799.1px;font-size:23px;color:#ececec;font-weight:400;letter-spacing:-1.3px;word-spacing:1.4px;">슬라이드 배경 채우기</div><div class="a" style="left:3240px;top:858px;width:600px;height:47px;background:#505050"></div><div class="t" style="left:3282.6px;top:867.6px;font-size:24px;color:#ececec;font-weight:400;letter-spacing:-1.4px;word-spacing:1.5px;">선</div><div class="t" style="left:3312.6px;top:930.1px;font-size:23px;color:#ececec;font-weight:400;letter-spacing:-1.3px;word-spacing:1.4px;">선 없음</div><div class="t" style="left:3312.6px;top:970.1px;font-size:23px;color:#ececec;font-weight:400;letter-spacing:-1.3px;word-spacing:1.4px;">실선</div><div class="t" style="left:3312.6px;top:1009.1px;font-size:23px;color:#ececec;font-weight:400;letter-spacing:-1.3px;word-spacing:1.4px;">그라데이션 선</div><div class="t" style="left:47.6px;top:2124.1px;font-size:23px;color:#e8e8e8;font-weight:400;letter-spacing:-1.2px;word-spacing:1.3px;">슬라이드 1/2</div><div class="t" style="left:210.6px;top:2124.1px;font-size:23px;color:#e8e8e8;font-weight:400;letter-spacing:-1.2px;word-spacing:1.3px;">한국어</div><div class="t" style="left:353.6px;top:2124.1px;font-size:23px;color:#e8e8e8;font-weight:400;letter-spacing:-1.2px;word-spacing:1.3px;">접근성: 조사 필요</div><div class="t" style="left:2878.6px;top:2123.1px;font-size:23px;color:#ececec;font-weight:400;letter-spacing:-1px;word-spacing:1.1px;">메모</div><div class="t" style="left:2998.6px;top:2123.1px;font-size:23px;color:#ececec;font-weight:400;letter-spacing:-1px;word-spacing:1.1px;">메모</div><div class="a" style="left:3062px;top:2115px;width:74px;height:45px;background:#525252"></div><div class="a" style="left:3395px;top:2132px;width:201px;height:9px;background:#6e6e6e;border-radius:5px"></div><div class="t" style="left:3659.5px;top:2123.0px;font-size:25px;color:#ececec;font-weight:400;letter-spacing:0px;">186%</div>
<svg width="3840" height="2160" style="position:absolute;left:0;top:0">
<path d="M230 27 H247 L254 34 V50 a3 3 0 0 1 -3 3 H230 a3 3 0 0 1 -3 -3 V30 a3 3 0 0 1 3 -3 Z" fill="none" stroke="#f2f2f2" stroke-width="2.2"/><path d="M233 27 V34 H245 V27" fill="none" stroke="#f2f2f2" stroke-width="2.2"/><path d="M232 53 V43 H249 V53" fill="none" stroke="#f2f2f2" stroke-width="2.2"/><path d="M290 53 H283 a3 3 0 0 1 -3 -3 V30 a3 3 0 0 1 3 -3 H300 L307 34 V38" fill="none" stroke="#f2f2f2" stroke-width="2.2"/><path d="M286 27 V34 H298 V27" fill="none" stroke="#f2f2f2" stroke-width="2.2"/><path d="M285 53 V43 H296" fill="none" stroke="#f2f2f2" stroke-width="2.2"/><path d="M294 54 L296 48 L307 37 L311 41 L300 52 Z" fill="#f2f2f2"/><rect x="331" y="30" width="7" height="18" fill="#d6d6d6"/><rect x="346" y="25.5" width="7" height="26.5" fill="#d6d6d6"/><rect x="360" y="37" width="5" height="10" fill="#d6d6d6"/><path d="M338 39 H346 M353 39 H360" stroke="#d6d6d6" stroke-width="2" stroke-dasharray="2 2"/><rect x="394" y="23" width="14" height="5" fill="#d6d6d6"/><rect x="387" y="36" width="27" height="6" fill="#d6d6d6"/><rect x="392" y="50" width="18" height="6" fill="#d6d6d6"/><path d="M401 28 V36 M401 42 V50" stroke="#d6d6d6" stroke-width="2" stroke-dasharray="3 2"/><rect x="446" y="35" width="5" height="13" fill="#d6d6d6"/><rect x="458" y="25.5" width="6" height="26.5" fill="#d6d6d6"/><path d="M438 39 H446 M451 39 H458 M464 39 H474" stroke="#d6d6d6" stroke-width="2" stroke-dasharray="4 2"/><rect x="500" y="30" width="18" height="5" fill="#d6d6d6"/><rect x="496" y="42" width="26" height="6" fill="#d6d6d6"/><path d="M509 22 V30 M509 35 V42 M509 48 V58" stroke="#d6d6d6" stroke-width="2"/><rect x="548" y="40" width="5" height="12" fill="#d6d6d6"/><rect x="560" y="23" width="6" height="29" fill="#d6d6d6"/><path d="M545 57 H582 M575 33 V53 M570 48 L575 53 L580 48" fill="none" stroke="#d6d6d6" stroke-width="2"/><rect x="601" y="27" width="5" height="12" fill="#d6d6d6"/><rect x="612" y="27" width="6" height="29" fill="#d6d6d6"/><path d="M600 23 H636 M629 27 V47 M624 32 L629 27 L634 32" fill="none" stroke="#d6d6d6" stroke-width="2"/><rect x="678" y="24" width="7" height="4" fill="#d6d6d6"/><rect x="655" y="34" width="30" height="7" fill="#d6d6d6"/><path d="M689 22 V58 M665 51 H685 M680 46 L685 51 L680 56" fill="none" stroke="#d6d6d6" stroke-width="2"/><rect x="714" y="24" width="12" height="4" fill="#d6d6d6"/><rect x="714" y="34" width="28" height="7" fill="#d6d6d6"/><path d="M708 22 V58 M732 51 H712 M717 46 L712 51 L717 56" fill="none" stroke="#d6d6d6" stroke-width="2"/><rect x="763" y="23" width="24" height="24" fill="#d6d6d6"/><rect x="778" y="38" width="19" height="19" fill="#d6d6d6" stroke="#222" stroke-width="0"/><path d="M776 47 H787 V38" fill="none" stroke="#222" stroke-width="2"/><rect x="817" y="23" width="14" height="14" fill="#d6d6d6"/><rect x="823" y="29" width="22" height="22" fill="#d6d6d6" stroke="#222" stroke-width="2"/><rect x="837" y="43" width="14" height="14" fill="#d6d6d6" stroke="#222" stroke-width="2"/><path d="M872 44 V24 H885 M904 43 V57 H891" fill="none" stroke="#d6d6d6" stroke-width="2.4"/><rect x="877" y="29" width="22" height="22" fill="#d6d6d6"/><rect x="925" y="23" width="24" height="24" fill="#d6d6d6"/><path d="M939 47 H949 V38 H959 V57 H940 V47 Z" fill="#d6d6d6"/><path d="M939 47 V49 M949 47 V38" stroke="#222" stroke-width="2"/><path d="M1012 23 V58 L991 44 Z M979 40 L987 35 V45 Z" fill="#d6d6d6"/><path d="M1012 23 L991 40" stroke="#222" stroke-width="0"/><path d="M1012 23 L985 40 L1012 57 Z" fill="#d6d6d6"/><path d="M980 40 L998 40" stroke="#222" stroke-width="3"/><path d="M1046 23 L1032 58 H1047 Z M1051 23 L1066 58 H1051 Z" fill="#d6d6d6"/><circle cx="1094" cy="40" r="3" fill="#f2f2f2"/><circle cx="1104" cy="40" r="3" fill="#f2f2f2"/><circle cx="1114" cy="40" r="3" fill="#f2f2f2"/><circle cx="3289" cy="38" r="9" fill="none" stroke="#9a9a9a" stroke-width="2.4"/><path d="M3295.5 44.5 L3303 52" stroke="#9a9a9a" stroke-width="2.6" stroke-linecap="round"/><path d="M3350 96 h24 a5 5 0 0 1 5 5 v12 a5 5 0 0 1 -5 5 h-14 l-7 6 v-6 h-3 a5 5 0 0 1 -5 -5 v-12 a5 5 0 0 1 5 -5 z" fill="none" stroke="#f4f4f4" stroke-width="2.4" stroke-linejoin="round"/><circle cx="3506" cy="108" r="15" fill="none" stroke="#f4f4f4" stroke-width="2.4"/><circle cx="3506" cy="108" r="9" fill="#f4f4f4"/><path d="M3704 98 h-9 a5 5 0 0 0 -5 5 v14 a5 5 0 0 0 5 5 h17 a5 5 0 0 0 5 -5 v-3" fill="none" stroke="#fff" stroke-width="2.4" stroke-linecap="round"/><path d="M3697 117 c1 -9 6 -15 16 -15 v-7 l9 9.5 l-9 9.5 v-7 c-7 0 -12 3 -16 10 z" fill="none" stroke="#fff" stroke-width="2.3" stroke-linejoin="round"/><path d="M3791 104 L3798.0 112 L3805 104" fill="none" stroke="#fff" stroke-width="2.4" stroke-linecap="round" stroke-linejoin="round"/><path d="M52 164 H37 V208 H58" fill="none" stroke="#e5923a" stroke-width="5"/><path d="M62 164 H74 V178" fill="none" stroke="#e5923a" stroke-width="5"/><path d="M43 169 V161 H51 a6 6 0 0 1 12 0 H67 V169 Z" fill="#222" stroke="#9a9a9a" stroke-width="2.2"/><rect x="61" y="179" width="26" height="34" fill="none" stroke="#dcdcdc" stroke-width="2.2"/><path d="M98.5 180 L103.75 186.5 L109.0 180" fill="none" stroke="#f4f4f4" stroke-width="2.6" stroke-linecap="round" stroke-linejoin="round"/><path d="M136 151 L147 175 M148 151 L137 175" stroke="#c8c8c8" stroke-width="1.8"/><circle cx="136" cy="178" r="3.5" fill="none" stroke="#3f8fde" stroke-width="2.2"/><circle cx="148" cy="178" r="3.5" fill="none" stroke="#3f8fde" stroke-width="2.2"/><path d="M136 220 H127 V195 H140 L143 198" fill="none" stroke="#dcdcdc" stroke-width="2"/><path d="M140 201 H150 L157 208 V225 H140 Z" fill="none" stroke="#dcdcdc" stroke-width="2"/><path d="M144 213 H152 M144 218 H152" stroke="#9a9a9a" stroke-width="1.6"/><path d="M255 207 L261.0 213.5 L267 207" fill="none" stroke="#f4f4f4" stroke-width="2.6" stroke-linecap="round" stroke-linejoin="round"/><path d="M127 252 L140 266 L151 255 L143 247 Z" fill="#6e5434" stroke="#8b7350" stroke-width="1.5"/><path d="M143 249 L156 238 L157 242 L148 251" fill="none" stroke="#8a8a8a" stroke-width="3"/><rect x="325" y="162" width="53" height="41" fill="none" stroke="#d0d0d0" stroke-width="2.2"/><rect x="330" y="167" width="43" height="31" fill="none" stroke="#8e8e8e" stroke-width="1.6"/><path d="M330 175 H373 M351 175 V198" stroke="#8e8e8e" stroke-width="1.6"/><path d="M334 150 V180 M319 165 H349" stroke="#6ad36a" stroke-width="2.4"/><path d="M393 180 L399.0 186.5 L405 180" fill="none" stroke="#f4f4f4" stroke-width="2.6" stroke-linecap="round" stroke-linejoin="round"/><rect x="476" y="161" width="55" height="42" fill="none" stroke="#d4d4d4" stroke-width="2"/><rect x="480" y="165" width="47" height="34" fill="none" stroke="#8e8e8e" stroke-width="1.6"/><path d="M487 175 H511 M487 182 H505 M487 189 H499" stroke="#8e8e8e" stroke-width="2"/><path d="M516 178 Q517.5 189 528 190.5 Q517.5 192 516 203 Q514.5 192 504 190.5 Q514.5 189 516 178 Z" fill="#d4552d"/><path d="M527 200 Q527.5 205 533 206 Q527.5 207 527 212 Q526.5 207 521 206 Q526.5 205 527 200 Z" fill="#d4552d"/><rect x="604" y="153" width="30" height="24" fill="none" stroke="#d4d4d4" stroke-width="2"/><rect x="608" y="157" width="22" height="16" fill="none" stroke="#8e8e8e" stroke-width="1.6"/><path d="M608 161 H630 M619 161 V173" stroke="#8e8e8e" stroke-width="1.6"/><path d="M732 163 L738.0 170 L744 163" fill="none" stroke="#f4f4f4" stroke-width="2.6" stroke-linecap="round" stroke-linejoin="round"/><rect x="604" y="196" width="30" height="25" fill="none" stroke="#d4d4d4" stroke-width="2"/><path d="M613 202 H630 V217 H608 V210" fill="none" stroke="#8e8e8e" stroke-width="1.6"/><path d="M620 210 a7 7 0 0 0 -7 -10 H605 M609 195 L604 200 L609 205" fill="none" stroke="#3f8fde" stroke-width="2.2"/><rect x="604" y="239" width="29" height="5" fill="none" stroke="#6ad36a" stroke-width="2"/><rect x="604" y="247" width="29" height="22" fill="none" stroke="#d4d4d4" stroke-width="2"/><rect x="608" y="251" width="21" height="14" fill="none" stroke="#8e8e8e" stroke-width="1.6"/><path d="M696 251 L702.0 258 L708 251" fill="none" stroke="#f4f4f4" stroke-width="2.6" stroke-linecap="round" stroke-linejoin="round"/><path d="M1115 175 L1121.0 182 L1127 175" fill="none" stroke="#f4f4f4" stroke-width="2.6" stroke-linecap="round" stroke-linejoin="round"/><path d="M1227 175 L1233.0 182 L1239 175" fill="none" stroke="#f4f4f4" stroke-width="2.6" stroke-linecap="round" stroke-linejoin="round"/><path d="M1283 170 L1287.5 165.5 L1292 170" fill="none" stroke="#3f8fde" stroke-width="2"/><path d="M1334 165 L1338.5 169.5 L1343 165" fill="none" stroke="#3f8fde" stroke-width="2"/><path d="M1406 190 L1416 180 L1426 189 L1416 199 Z" fill="#222" stroke="#c46fd8" stroke-width="2"/><path d="M1409 190 L1413 186 L1417 190 L1413 194 Z" fill="#c46fd8"/><path d="M1113 251 H1125 M1118 246 L1113 251 L1118 256 M1131 251 H1143 M1138 246 L1143 251 L1138 256" fill="none" stroke="#3f8fde" stroke-width="2.2"/><path d="M1158 239 L1164.0 246 L1170 239" fill="none" stroke="#f4f4f4" stroke-width="2.6" stroke-linecap="round" stroke-linejoin="round"/><path d="M1234 239 L1240.0 246 L1246 239" fill="none" stroke="#f4f4f4" stroke-width="2.6" stroke-linecap="round" stroke-linejoin="round"/><path d="M1296 248 L1304 236 L1318 222 a3 3 0 0 1 5 0 l2 2 a3 3 0 0 1 0 5 L1311 243 L1300 249 Z" fill="#222" stroke="#cfcfcf" stroke-width="2"/><path d="M1294 249 L1300 243 L1305 248 Z" fill="#8e8e8e"/><path d="M1340 239 L1346.0 246 L1352 239" fill="none" stroke="#f4f4f4" stroke-width="2.6" stroke-linecap="round" stroke-linejoin="round"/><path d="M1416 239 L1422.0 246 L1428 239" fill="none" stroke="#f4f4f4" stroke-width="2.6" stroke-linecap="round" stroke-linejoin="round"/><rect x="1484" y="162.5" width="6" height="6" fill="#3f8fde"/><rect x="1484" y="174.5" width="6" height="6" fill="#3f8fde"/><rect x="1484" y="186.5" width="6" height="6" fill="#3f8fde"/><path d="M1494 165 H1514 M1494 177 H1514 M1494 189 H1514" stroke="#eee" stroke-width="2"/><path d="M1530 175 L1535.75 182 L1541.5 175" fill="none" stroke="#f4f4f4" stroke-width="2.6" stroke-linecap="round" stroke-linejoin="round"/><path d="M1570 165 H1590 M1570 177 H1590 M1570 189 H1590" stroke="#eee" stroke-width="2"/><path d="M1606 175 L1612.0 182 L1618 175" fill="none" stroke="#f4f4f4" stroke-width="2.6" stroke-linecap="round" stroke-linejoin="round"/><path d="M1668 165 H1696 M1684 173 H1696 M1684 181 H1696 M1668 189 H1696" stroke="#6a6a6a" stroke-width="2"/><path d="M1680 177 H1668 M1673 172 L1668 177 L1673 182" fill="none" stroke="#2f5d86" stroke-width="2"/><path d="M1720 165 H1748 M1736 173 H1748 M1736 181 H1748 M1720 189 H1748" stroke="#6a6a6a" stroke-width="2"/><path d="M1720 177 H1732 M1727 172 L1732 177 L1727 182" fill="none" stroke="#2f5d86" stroke-width="2"/><path d="M1805 164 V191 M1800 169 L1805 164 L1810 169 M1800 186 L1805 191 L1810 186" fill="none" stroke="#3f8fde" stroke-width="2.2"/><path d="M1814 165 H1832 M1814 173 H1832 M1814 181 H1832 M1814 189 H1832" stroke="#eee" stroke-width="2"/><path d="M1846 175 L1852.0 182 L1858 175" fill="none" stroke="#f4f4f4" stroke-width="2.6" stroke-linecap="round" stroke-linejoin="round"/><path d="M1910 171 H1920 M1910 177 H1920 M1910 183 H1920 M1924 171 H1934 M1924 177 H1934 M1924 183 H1934" stroke="#3f8fde" stroke-width="2"/><path d="M1952 175 L1958.0 182 L1964 175" fill="none" stroke="#f4f4f4" stroke-width="2.6" stroke-linecap="round" stroke-linejoin="round"/><path d="M1981 160 H2017 L2034 177 H2015 V195 H1981 L1997 177 Z" fill="#2b482b" stroke="#4f6e4f" stroke-width="1.5"/><rect x="2003" y="181" width="34" height="22" fill="#222" stroke="#6a6a6a" stroke-width="2"/><path d="M2009 189 H2010 M2013 189 H2032 M2009 195 H2010 M2013 195 H2032" stroke="#6a6a6a" stroke-width="1.6"/><path d="M2052 179 L2058.0 186 L2064 179" fill="none" stroke="#7a7a7a" stroke-width="2.6" stroke-linecap="round" stroke-linejoin="round"/><path d="M1486 229 H1514 M1486 237 H1506 M1486 245 H1514 M1486 253 H1506" stroke="#eee" stroke-width="2"/><path d="M1538 229 H1566 M1542 237 H1562 M1538 245 H1566 M1542 253 H1562" stroke="#eee" stroke-width="2"/><path d="M1590 229 H1618 M1598 237 H1618 M1590 245 H1618 M1598 253 H1618" stroke="#eee" stroke-width="2"/><path d="M1642 229 H1670 M1642 237 H1670 M1642 245 H1670 M1642 253 H1670" stroke="#eee" stroke-width="2"/><path d="M1693 226 V258 M1723 226 V258 M1697 232 H1719 M1701 228 L1697 232 L1701 236 M1715 228 L1719 232 L1715 236" fill="none" stroke="#3f8fde" stroke-width="2"/><path d="M1696 239 H1720 M1696 247 H1720 M1696 255 H1720" stroke="#eee" stroke-width="2"/><path d="M1783 226 V257 M1778 252 L1783 257 L1788 252 M1797 242 V257 M1792 252 L1797 257 L1802 252" fill="none" stroke="#d8d8d8" stroke-width="2"/><path d="M1820 239 L1826.0 246 L1832 239" fill="none" stroke="#f4f4f4" stroke-width="2.6" stroke-linecap="round" stroke-linejoin="round"/><path d="M1856 230 H1851 V251 H1856 M1876 230 H1881 V251 H1876 M1857 241 H1875" fill="none" stroke="#d8d8d8" stroke-width="2"/><path d="M1866 226 V236 M1862 230 L1866 226 L1870 230 M1866 245 V255 M1862 251 L1866 255 L1870 251" fill="none" stroke="#3f8fde" stroke-width="2"/><path d="M1896 239 L1902.0 246 L1908 239" fill="none" stroke="#f4f4f4" stroke-width="2.6" stroke-linecap="round" stroke-linejoin="round"/><rect x="2124" y="161" width="55" height="41" fill="none" stroke="#d4d4d4" stroke-width="2"/><path d="M2125 200 V186 L2139 172 L2160 200 Z M2150 188 L2158 181 L2178 199 V200 H2162 Z" fill="#1c5fab" stroke="#5ea0e8" stroke-width="1.2"/><path d="M2170 166 a5 5 0 1 0 6 7 a4 4 0 0 1 -6 -7 Z" fill="#f0a04a"/><path d="M2193 179 L2199.0 186 L2205 179" fill="none" stroke="#f4f4f4" stroke-width="2.6" stroke-linecap="round" stroke-linejoin="round"/><rect x="2224" y="155" width="37" height="37" fill="#1c5fab" stroke="#5ea0e8" stroke-width="1.5"/><circle cx="2259" cy="190" r="20.5" fill="#222"/><circle cx="2259" cy="190" r="19" fill="#222" stroke="#d4d4d4" stroke-width="2"/><path d="M2293 179 L2299.0 186 L2305 179" fill="none" stroke="#f4f4f4" stroke-width="2.6" stroke-linecap="round" stroke-linejoin="round"/><rect x="2324" y="160" width="55" height="45" fill="none" stroke="#d4d4d4" stroke-width="2"/><rect x="2320" y="156" width="8" height="8" fill="#3f8fde"/><rect x="2375" y="156" width="8" height="8" fill="#3f8fde"/><rect x="2320" y="201" width="8" height="8" fill="#3f8fde"/><rect x="2375" y="201" width="8" height="8" fill="#3f8fde"/><path d="M2393 179 L2399.0 186 L2405 179" fill="none" stroke="#f4f4f4" stroke-width="2.6" stroke-linecap="round" stroke-linejoin="round"/><rect x="2470" y="163" width="38" height="38" fill="#e08a35" stroke="#f7c979" stroke-width="1.5"/><rect x="2462" y="155" width="23" height="23" fill="#222" stroke="#d4d4d4" stroke-width="2"/><rect x="2494" y="187" width="23" height="23" fill="#222" stroke="#d4d4d4" stroke-width="2"/><path d="M2531 179 L2537.0 186 L2543 179" fill="none" stroke="#f4f4f4" stroke-width="2.6" stroke-linecap="round" stroke-linejoin="round"/><rect x="2562" y="155" width="55" height="54" rx="4" fill="none" stroke="#d4d4d4" stroke-width="2"/><path d="M2620 175 L2595 203" stroke="#222" stroke-width="8"/><path d="M2620 175 L2595 203" stroke="#cfcfcf" stroke-width="4.5" stroke-linecap="round"/><path d="M2620 175 L2595 203" stroke="#222" stroke-width="1.5"/><path d="M2576 209 c6 -2 8 -8 12 -11 a5 5 0 0 1 8 6 c-4 6 -12 7 -20 5 Z" fill="#1c5fab" stroke="#5ea0e8" stroke-width="1.2"/><path d="M2631 179 L2637.0 186 L2643 179" fill="none" stroke="#f4f4f4" stroke-width="2.6" stroke-linecap="round" stroke-linejoin="round"/><path d="M2668 173 L2678 163 L2690 175 L2680 185 Z" fill="none" stroke="#cfcfcf" stroke-width="1.8"/><path d="M2677 164 V158 a2 2 0 0 1 4 0 V172" fill="none" stroke="#cfcfcf" stroke-width="1.6"/><path d="M2686 170 c3 -3 4 -3 5 0 c1 3 0 5 -1 8 c-1 -3 -2 -5 -4 -8 Z" fill="#6fb1ef"/><path d="M2812 175 L2818.0 182 L2824 175" fill="none" stroke="#f4f4f4" stroke-width="2.6" stroke-linecap="round" stroke-linejoin="round"/><path d="M2677 229 H2663 V248 H2669" fill="none" stroke="#d4d4d4" stroke-width="1.8"/><path d="M2671 247 L2674 238 L2687 225 a2.5 2.5 0 0 1 4 0 l1 1 a2.5 2.5 0 0 1 0 4 L2679 243 Z" fill="none" stroke="#4a9be8" stroke-width="2"/><path d="M2812 239 L2818.0 246 L2824 239" fill="none" stroke="#f4f4f4" stroke-width="2.6" stroke-linecap="round" stroke-linejoin="round"/><rect x="2880" y="154" width="56" height="56" fill="none" stroke="#d24a26" stroke-width="2"/><rect x="2885" y="159" width="20" height="20" fill="none" stroke="#d24a26" stroke-width="2"/><rect x="2910" y="159" width="20" height="20" fill="none" stroke="#d24a26" stroke-width="2"/><rect x="2885" y="184" width="20" height="20" fill="none" stroke="#d24a26" stroke-width="2"/><rect x="2910" y="184" width="20" height="20" fill="none" stroke="#d24a26" stroke-width="2"/><path d="M3022 161 H2995 V203 H3050 V185" fill="none" stroke="#d4d4d4" stroke-width="2"/><path d="M3025 165 H2999 V199 H3046 V184 M2999 175 H3034 M3021 175 V199" fill="none" stroke="#8e8e8e" stroke-width="1.6"/><path d="M3037 150 Q3038 160 3048 161 Q3038 162 3037 172 Q3036 162 3026 161 Q3036 160 3037 150 Z" fill="#d4552d"/><path d="M3048 170 Q3048.5 175 3054 176 Q3048.5 177 3048 182 Q3047.5 177 3042 176 Q3047.5 175 3048 170 Z" fill="#d4552d"/><defs>
<linearGradient id="cpA" x1="0" y1="0" x2="0" y2="1"><stop offset="0" stop-color="#2aa7f2"/><stop offset="0.55" stop-color="#3fbf6a"/><stop offset="1" stop-color="#f7c62f"/></linearGradient>
<linearGradient id="cpB" x1="0" y1="0" x2="0" y2="1"><stop offset="0" stop-color="#a05bf0"/><stop offset="0.5" stop-color="#e8588a"/><stop offset="1" stop-color="#f7a25a"/></linearGradient>
<linearGradient id="cpC" x1="0" y1="0" x2="1" y2="0"><stop offset="0" stop-color="#1f6fe0"/><stop offset="1" stop-color="#0c3fb0"/></linearGradient>
<linearGradient id="cpD" x1="0" y1="0" x2="1" y2="0"><stop offset="0" stop-color="#e8502e"/><stop offset="1" stop-color="#f7a25a"/></linearGradient>
</defs><linearGradient id="cpE" x1="0" y1="0" x2="1" y2="0.3"><stop offset="0" stop-color="#3a8ff0"/><stop offset="1" stop-color="#123fb5"/></linearGradient><path d="M3085 156 H3110 Q3116 156 3118 162 L3120 169 H3106 Q3100 169 3098 175 L3092 195 Q3090 201 3084 201 H3078 Q3071 201 3072 194 L3077 165 Q3079 156 3085 156 Z" fill="url(#cpA)"/><path d="M3100 156 H3110 Q3116 156 3118 162 L3120 169 H3106 Q3102 169 3100 172 Z" fill="url(#cpE)" opacity=".9"/><path d="M3119 208 H3094 Q3088 208 3086 202 L3084 195 H3098 Q3104 195 3106 189 L3112 169 Q3114 163 3120 163 H3126 Q3133 163 3132 170 L3127 199 Q3125 208 3119 208 Z" fill="url(#cpB)"/><path d="M3104 208 H3094 Q3088 208 3086 202 L3084 195 H3098 Q3102 195 3104 192 Z" fill="#e8552e" opacity=".85"/><path d="M3250 158 H3228 a4 4 0 0 0 -4 4 V200 a4 4 0 0 0 4 4 H3244 M3250 158 L3261 169 V186" fill="none" stroke="#3b78e0" stroke-width="2.4" stroke-linejoin="round"/><path d="M3232 194 c4 -3 8 -10 10 -18 c1 -5 -1 -7 -2 -3 c-1 5 3 13 9 15 c3 1 4 -2 1 -2 c-5 0 -13 3 -18 8 Z" fill="none" stroke="#3b78e0" stroke-width="1.5"/><path d="M3254 191 l5 -5 a4.5 4.5 0 0 1 7 7 l-5 5 M3260 203 l-5 5 a4.5 4.5 0 0 1 -7 -7 l5 -5 M3254 200 L3262 192" fill="none" stroke="#3b78e0" stroke-width="2.6" stroke-linecap="round"/><circle cx="100.5" cy="383" r="1.8" fill="#4466ee"/><circle cx="107.5" cy="383" r="1.8" fill="#4466ee"/><circle cx="104" cy="384.5" r="2" fill="#4466ee"/><path d="M98 390 q2.5 -5 6 -4 q3.5 -1 6 4 z" fill="#4466ee"/><path d="M1028.7 308 V316 M1055.1 298 V316 M1081.5 308 V316 M1107.9 308 V316 M1134.3 308 V316 M1160.7 298 V316 M1187.1 308 V316 M1213.5 308 V316 M1239.9 308 V316 M1266.3 298 V316 M1292.7 308 V316 M1319.1 308 V316 M1345.5 308 V316 M1371.9 298 V316 M1398.3 308 V316 M1424.7 308 V316 M1451.1 308 V316 M1477.5 298 V316 M1503.9 308 V316 M1530.3 308 V316 M1556.7 308 V316 M1583.1 298 V316 M1609.5 308 V316 M1635.9 308 V316 M1662.3 308 V316 M1688.7 298 V316 M1715.1 308 V316 M1741.5 308 V316 M1767.9 308 V316 M1794.3 298 V316 M1820.7 308 V316 M1847.1 308 V316 M1873.5 308 V316 M1899.9 298 V316 M1926.3 308 V316 M1952.7 308 V316 M1979.1 308 V316 M2005.5 298 V316 M2031.9 308 V316 M2058.3 308 V316 M2084.7 308 V316 M2111.1 298 V316 M2137.5 308 V316 M2163.9 308 V316 M2190.3 308 V316 M2216.7 298 V316 M2243.1 308 V316 M2269.5 308 V316 M2295.9 308 V316 M2322.3 298 V316 M2348.7 308 V316 M2375.1 308 V316 M2401.5 308 V316 M2427.9 298 V316 M2454.3 308 V316 M2480.7 308 V316 M2507.1 308 V316 M2533.5 298 V316 M2559.9 308 V316 M2586.3 308 V316 M2612.7 308 V316 M2639.1 298 V316 M2665.5 308 V316 M2691.9 308 V316 M2718.3 308 V316 M2744.7 298 V316 M2771.1 308 V316 M2797.5 308 V316 M2823.9 308 V316 M2850.3 298 V316 M2876.7 308 V316 M2903.1 308 V316 M2929.5 308 V316 M2955.9 298 V316 M2982.3 308 V316 M3008.7 308 V316 M3035.1 308 V316 M3061.5 298 V316 M3087.9 308 V316 M3114.3 308 V316 M3140.7 308 V316 M3167.1 298 V316 M3193.5 308 V316 M3219.9 308 V316" stroke="#a0a0a0" stroke-width="2"/><path d="M1025 297 V323" stroke="#e8e8e8" stroke-width="2"/><path d="M1972 289 V316" stroke="#e8e8e8" stroke-width="2"/><path d="M452 340.4 H460 M452 366.8 H460 M442 393.2 H460 M452 419.6 H460 M452 446.0 H460 M452 472.4 H460 M442 498.8 H460 M452 525.2 H460 M452 551.6 H460 M452 578.0 H460 M442 604.4 H460 M452 630.8 H460 M452 657.2 H460 M452 683.6 H460 M442 710.0 H460 M452 736.4 H460 M452 762.8 H460 M452 789.2 H460 M442 815.6 H460 M452 842.0 H460 M452 868.4 H460 M452 894.8 H460 M442 921.2 H460 M452 947.6 H460 M452 974.0 H460 M452 1000.4 H460 M442 1026.8 H460 M452 1053.2 H460 M452 1079.6 H460 M452 1106.0 H460 M442 1132.4 H460 M452 1158.8 H460 M452 1185.2 H460 M452 1211.6 H460 M442 1238.0 H460 M452 1264.4 H460 M452 1290.8 H460 M452 1317.2 H460 M442 1343.6 H460 M452 1370.0 H460 M452 1396.4 H460 M452 1422.8 H460 M442 1449.2 H460 M452 1475.6 H460 M452 1502.0 H460 M452 1528.4 H460 M442 1554.8 H460 M452 1581.2 H460 M452 1607.6 H460 M452 1634.0 H460 M442 1660.4 H460 M452 1686.8 H460 M452 1713.2 H460 M452 1739.6 H460 M442 1766.0 H460 M452 1792.4 H460 M452 1818.8 H460 M452 1845.2 H460 M442 1871.6 H460 M452 1898.0 H460 M452 1924.4 H460 M452 1950.8 H460" stroke="#a0a0a0" stroke-width="2"/><path d="M438 1969 H468" stroke="#e8e8e8" stroke-width="2.2"/><circle cx="3794" cy="313" r="14" fill="#5c5c5c"/><path d="M3788.5 307.5 L3799.5 318.5 M3799.5 307.5 L3788.5 318.5" stroke="#1e1e1e" stroke-width="2.6" stroke-linecap="round"/><path d="M3302 466 L3284 483 L3300 499 L3318 481 L3310 473" fill="none" stroke="#e6e6e6" stroke-width="2.2" stroke-linejoin="miter"/><path d="M3302 467 V461.5 a2.7 2.7 0 0 1 5.4 0 V479" fill="none" stroke="#e6e6e6" stroke-width="2"/><path d="M3311 472 C3318 466 3325 470 3326 480 C3327 490 3324 497 3322 500 C3321 492 3319 482 3311 472 Z" fill="#1c5fab" stroke="#6fb1ef" stroke-width="1.4"/><path d="M3388 459 L3406 473 L3399 494 H3377 L3370 473 Z" fill="none" stroke="#e6e6e6" stroke-width="2.2" stroke-linejoin="miter"/><path d="M3376 499.5 H3400" stroke="#151515" stroke-width="4"/><path d="M3375 501 L3377 496 M3401 501 L3399 496" stroke="#777" stroke-width="1.5"/><path d="M3448 469 H3458 M3448 501 H3458 M3453 469 V501 M3460 456 V466 M3494 456 V466 M3460 461 H3494" fill="none" stroke="#e0e0e0" stroke-width="2"/><rect x="3460" y="469" width="34" height="32" fill="none" stroke="#e0e0e0" stroke-width="2"/><path d="M3477 472 V482 M3473 476 L3477 472 L3481 476 M3477 488 V498 M3473 494 L3477 498 L3481 494 M3463 485 H3473 M3467 481 L3463 485 L3467 489 M3481 485 H3491 M3487 481 L3491 485 L3487 489" fill="none" stroke="#4d9be6" stroke-width="2"/><path d="M3258 548 L3264.0 555 L3270 548" fill="none" stroke="#ececec" stroke-width="2.4" stroke-linecap="round" stroke-linejoin="round"/><circle cx="3288" cy="612" r="14" fill="#b45a28"/><circle cx="3288" cy="612" r="13" fill="none" stroke="#c76b35" stroke-width="2"/><circle cx="3288" cy="612" r="5" fill="#fff"/><circle cx="3288" cy="652" r="14" fill="#555"/><circle cx="3288" cy="652" r="13.3" fill="none" stroke="#4a4a4a" stroke-width="1.4"/><circle cx="3288" cy="692" r="14" fill="#555"/><circle cx="3288" cy="692" r="13.3" fill="none" stroke="#4a4a4a" stroke-width="1.4"/><circle cx="3288" cy="732" r="14" fill="#555"/><circle cx="3288" cy="732" r="13.3" fill="none" stroke="#4a4a4a" stroke-width="1.4"/><circle cx="3288" cy="772" r="14" fill="#555"/><circle cx="3288" cy="772" r="13.3" fill="none" stroke="#4a4a4a" stroke-width="1.4"/><circle cx="3288" cy="812" r="14" fill="#555"/><circle cx="3288" cy="812" r="13.3" fill="none" stroke="#4a4a4a" stroke-width="1.4"/><path d="M3258 878 L3264.0 885 L3270 878" fill="none" stroke="#ececec" stroke-width="2.4" stroke-linecap="round" stroke-linejoin="round"/><circle cx="3288" cy="943" r="14" fill="#b45a28"/><circle cx="3288" cy="943" r="13" fill="none" stroke="#c76b35" stroke-width="2"/><circle cx="3288" cy="943" r="5" fill="#fff"/><circle cx="3288" cy="983" r="14" fill="#555"/><circle cx="3288" cy="983" r="13.3" fill="none" stroke="#4a4a4a" stroke-width="1.4"/><circle cx="3288" cy="1022" r="14" fill="#555"/><circle cx="3288" cy="1022" r="13.3" fill="none" stroke="#4a4a4a" stroke-width="1.4"/><circle cx="330" cy="2124" r="3.5" fill="none" stroke="#e8e8e8" stroke-width="2"/><path d="M316 2130 C322 2132 332 2131 341 2128 M330 2131 L326 2150 M330 2135 L335 2144 L343 2136 M335 2144 L343 2151" fill="none" stroke="#e8e8e8" stroke-width="2.2" stroke-linecap="round"/><path d="M2842 2129 H2866 M2842 2136 H2866 M2842 2143 H2866 M2842 2150 H2858 M2849 2124 L2854 2119 L2859 2124 Z" fill="#ececec" stroke="#ececec" stroke-width="2"/><path d="M2963 2125 h24 a2 2 0 0 1 2 2 v15 a2 2 0 0 1 -2 2 h-14 l-6 5 v-5 h-4 a2 2 0 0 1 -2 -2 v-15 a2 2 0 0 1 2 -2 z" fill="#ececec"/><rect x="3085" y="2124" width="28" height="26" rx="2" fill="#f2f2f2"/><rect x="3094" y="2129" width="14" height="8" fill="#525252"/><rect x="3094" y="2132" width="11" height="3" fill="#f2f2f2"/><path d="M3091 2124 V2150 M3091 2145 H3113" stroke="#525252" stroke-width="2"/><g fill="#f2f2f2"><rect x="3155" y="2126" width="13" height="9" rx="2"/><rect x="3173" y="2126" width="13" height="9" rx="2"/><rect x="3155" y="2140" width="13" height="9" rx="2"/><rect x="3173" y="2140" width="13" height="9" rx="2"/></g><path d="M3229 2126 c5 -1 10 -1 14 2 c4 -3 9 -3 14 -2 V2149 c-5 -1 -10 -1 -14 2 c-4 -3 -9 -3 -14 -2 Z M3243 2128 V2151 M3233 2132 H3240 M3233 2137 H3240 M3233 2142 H3240 M3246 2132 H3253 M3246 2137 H3253 M3246 2142 H3253" fill="none" stroke="#f2f2f2" stroke-width="2"/><path d="M3300 2126 H3330 M3303 2126 V2143 H3327 V2126 M3315 2143 V2151 M3309 2151 H3321 M3308 2133 H3320" fill="none" stroke="#f2f2f2" stroke-width="2.4"/><path d="M3366 2137 H3382" stroke="#f2f2f2" stroke-width="3.5"/><circle cx="3495" cy="2137" r="3" fill="#333"/><circle cx="3519" cy="2137" r="16" fill="#b0b0b0"/><path d="M3610 2137 H3627 M3618.5 2128 V2146" stroke="#f2f2f2" stroke-width="3.5"/><rect x="3767" y="2124" width="27" height="26" fill="none" stroke="#f2f2f2" stroke-width="2"/><path d="M3780.5 2128 V2146 M3771 2137 H3790 M3777 2131 L3780.5 2127.5 L3784 2131 M3777 2143 L3780.5 2146.5 L3784 2143 M3774 2133.5 L3770.5 2137 L3774 2140.5 M3787 2133.5 L3790.5 2137 L3787 2140.5" fill="none" stroke="#f2f2f2" stroke-width="1.6"/>
</svg>
</body></html>
